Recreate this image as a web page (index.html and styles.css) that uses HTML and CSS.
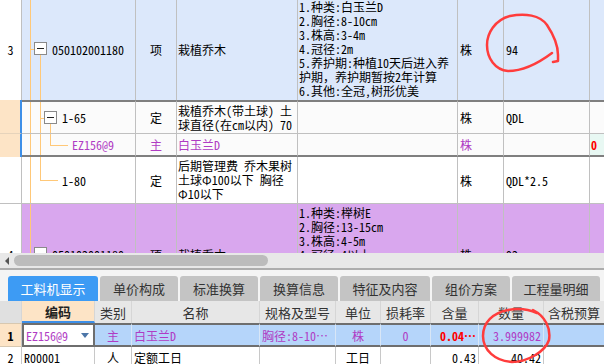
FILE: index.html
```html
<!DOCTYPE html>
<html lang="zh">
<head>
    <meta charset="utf-8">
    <title>分部分项</title>
    <link rel="stylesheet" href="styles.css">
</head>
<body>
<div class="grid">
    <div class="row r-item r3">
        <div class="c w-no">3</div>
        <div class="c w-code pad-a">
            <span class="t th h-a"></span><span class="tb b-a"></span><span class="t tv v-b-down"></span>050102001180
        </div>
        <div class="c w-type">项</div>
        <div class="c w-name">栽植乔木</div>
        <div class="c w-feat"><div class="lines">1.种类:白玉兰D<br>2.胸径:8-10cm<br>3.株高:3-4m<br>4.冠径:2m<br>5.养护期:种植10天后进入养<br>护期，养护期暂按2年计算<br>6.其他:全冠,树形优美</div></div>
        <div class="c w-unit">株</div>
        <div class="c w-expr">94</div>
        <div class="c w-last"></div>
    </div>
    <div class="grp">
        <div class="row r-sub first r165">
            <div class="c w-no"></div>
            <div class="c w-code pad-b">
                <span class="t tv v-b"></span><span class="t th h-b"></span><span class="tb b-b"></span><span class="t tv v-c-down"></span>1-65
            </div>
            <div class="c w-type">定</div>
            <div class="c w-name"><div class="lines">栽植乔木(带土球) 土<br>球直径(在cm以内) 70</div></div>
            <div class="c w-feat"></div>
            <div class="c w-unit">株</div>
            <div class="c w-expr">QDL</div>
            <div class="c w-last"></div>
        </div>
        <div class="row r-sub last rez">
            <div class="c w-no"></div>
            <div class="c w-code pad-c purple">
                <span class="t tv v-b"></span><span class="t tv v-c-up"></span><span class="t th h-c-leaf"></span>EZ156@9
            </div>
            <div class="c w-type purple">主</div>
            <div class="c w-name purple">白玉兰D</div>
            <div class="c w-feat"></div>
            <div class="c w-unit purple">株</div>
            <div class="c w-expr"></div>
            <div class="c w-last zero">0</div>
        </div>
    </div>
    <div class="row r180">
        <div class="c w-no"></div>
        <div class="c w-code pad-b">
            <span class="t tv v-b-up"></span><span class="t th h-b-leaf"></span>1-80
        </div>
        <div class="c w-type">定</div>
        <div class="c w-name"><div class="lines">后期管理费 乔木果树<br>土球Φ100以下 胸径<br>Φ10以下</div></div>
        <div class="c w-feat"></div>
        <div class="c w-unit">株</div>
        <div class="c w-expr">QDL*2.5</div>
        <div class="c w-last"></div>
    </div>
    <div class="row r-item r4">
        <div class="c w-no">4</div>
        <div class="c w-code pad-a">
            <span class="t th h-a"></span><span class="tb b-a"></span><span class="t tv v-b-down"></span>050102001180
        </div>
        <div class="c w-type">项</div>
        <div class="c w-name">栽植乔木</div>
        <div class="c w-feat"><div class="lines">1.种类:榉树E<br>2.胸径:13-15cm<br>3.株高:4-5m<br>4.冠径:4以上</div></div>
        <div class="c w-unit">株</div>
        <div class="c w-expr">92</div>
        <div class="c w-last"></div>
    </div>
</div>

<div class="hscroll">
    <span class="arrow"></span>
    <span class="thumb"></span>
</div>

<div class="tabs">
    <div class="tab on w90">工料机显示</div>
    <div class="tab">单价构成</div>
    <div class="tab">标准换算</div>
    <div class="tab">换算信息</div>
    <div class="tab w90">特征及内容</div>
    <div class="tab">组价方案</div>
    <div class="tab w88">工程量明细</div>
</div>

<div class="btable">
    <div class="brow bhead">
        <div class="bc b-no"></div>
        <div class="bc b-code key">编码</div>
        <div class="bc b-type">类别</div>
        <div class="bc b-name">名称</div>
        <div class="bc b-spec">规格及型号</div>
        <div class="bc b-unit">单位</div>
        <div class="bc b-loss">损耗率</div>
        <div class="bc b-qty">含量</div>
        <div class="bc b-num">数量</div>
        <div class="bc b-tax">含税预算</div>
    </div>
    <div class="brow sel">
        <div class="bc b-no">1</div>
        <div class="bc b-code edit"><span>EZ156@9</span><span class="drop"></span></div>
        <div class="bc b-type">主</div>
        <div class="bc b-name left">白玉兰D</div>
        <div class="bc b-spec left">胸径:8-10…</div>
        <div class="bc b-unit">株</div>
        <div class="bc b-loss">0</div>
        <div class="bc b-qty right red">0.04…</div>
        <div class="bc b-num right">3.999982</div>
        <div class="bc b-tax"></div>
    </div>
    <div class="brow">
        <div class="bc b-no">2</div>
        <div class="bc b-code left">R00001</div>
        <div class="bc b-type">人</div>
        <div class="bc b-name left">定额工日</div>
        <div class="bc b-spec"></div>
        <div class="bc b-unit">工日</div>
        <div class="bc b-loss"></div>
        <div class="bc b-qty right">0.43</div>
        <div class="bc b-num right">40.42</div>
        <div class="bc b-tax"></div>
    </div>
</div>

<svg class="marks" width="604" height="364" viewBox="0 0 604 364">
    <path d="M552,53 C540,62 523,71 508,71 C495,70 487,58 487,45 C487,33 495,20 510,16 C525,13 540,15 547,25 C553,34 558,45 558,55 L558,61 L553,62"/>
    <path d="M533,310 C545,316 551,328 549,340 C545,352 527,362 512,362 C495,361 483,350 483,336 C483,322 493,313 508,310 C518,308 528,309 537,313"/>
</svg>
</body>
</html>
```

FILE: styles.css
```css
body {
    margin: 0;
    width: 604px;
    height: 364px;
    overflow: hidden;
    position: relative;
    background: #fff;
    color: #000;
    font-size: 12px;
    font-family: "Noto Sans Mono CJK SC", "Liberation Mono", "Noto Sans CJK SC", monospace;
}

/* top grid */

.grid {
    height: 255px;
    margin-top: -2px;
    overflow: hidden;
}

.row {
    display: flex;
}

.c {
    box-sizing: border-box;
    border-right: 1px solid #c0c0c0;
    border-bottom: 1px solid #c0c0c0;
    display: flex;
    align-items: center;
    white-space: nowrap;
    overflow: hidden;
    padding: 0 2px;
}

.lines {
    line-height: 14px;
}

.w-no {
    width: 22px;
    padding: 0;
    justify-content: center;
    background: #fff;
}

.w-code {
    width: 114px;
    position: relative;
    background-image: linear-gradient(#ffc878, #ffc878);
    background-repeat: no-repeat;
    background-size: 1px 100%;
    background-position: 8px 0;
}

.w-type {
    width: 41px;
    justify-content: center;
}

.w-name {
    width: 121px;
    padding-left: 1px;
}

.w-feat {
    width: 160px;
    padding-left: 1px;
}

.w-unit {
    width: 46px;
}

.w-expr {
    width: 86px;
}

.w-last {
    flex: 1;
    border-right: 0;
}

.r3 {
    height: 102px;
}

.r3 .c {
    border-bottom: 0;
}

.r3 .c:not(.w-no) {
    background-color: #dce8fb;
}

.r4 {
    height: 101px;
}

.r4 .c:not(.w-no) {
    background-color: #d9a7ee;
}

.r4 .w-feat {
    align-items: flex-start;
    padding-top: 2px;
}

.r165 {
    height: 34px;
}

.rez {
    height: 23px;
}

.r180 {
    height: 47px;
}

.r-sub .c {
    background-color: #fbfbfb;
}

.r-sub .w-no {
    background: #fde4c6;
    border-right: 2px solid #3d8fe8;
}

.r-sub.first .c:not(.w-no) {
    border-top: 2px solid #7f7f7f;
}

.r-sub.last .c:not(.w-no) {
    border-bottom: 2px solid #7f7f7f;
}

.r-sub.last .w-no {
    border-bottom: 0;
}

.r-sub.first .w-no {
    border-bottom-color: #e6d3bb;
}

.purple {
    color: #b03cc4;
}

.zero {
    background-color: #e8f8f3 !important;
    color: #f00;
    font-weight: bold;
    padding-left: 1px;
}

/* tree connectors */

.pad-a {
    padding-left: 30px;
}

.pad-b {
    padding-left: 40px;
}

.pad-c {
    padding-left: 50px;
}

.t {
    position: absolute;
    background: #ffc878;
}

.tv {
    width: 1px;
}

.th {
    height: 1px;
    top: 50%;
}

.tb {
    position: absolute;
    top: 50%;
    width: 13px;
    height: 13px;
    margin-top: -7px;
    box-sizing: border-box;
    border: 1px solid #8a8a8a;
    background: #fff;
}

.tb::after {
    content: "";
    position: absolute;
    left: 2px;
    right: 2px;
    top: 5px;
    height: 1px;
    background: #222;
}

.h-a { left: 8px; width: 4px; }
.b-a { left: 12px; }
.v-b-down { left: 18px; top: calc(50% + 6px); bottom: 0; }
.v-b { left: 18px; top: 0; bottom: 0; }
.v-b-up { left: 18px; top: 0; height: 50%; }
.h-b { left: 18px; width: 4px; }
.h-b-leaf { left: 18px; width: 18px; }
.b-b { left: 22px; }
.v-c-down { left: 28px; top: calc(50% + 6px); bottom: 0; }
.v-c-up { left: 28px; top: 0; height: 50%; }
.h-c-leaf { left: 28px; width: 18px; }

/* scrollbar + tabs */

.hscroll {
    height: 15px;
    background: #e8e8e8;
    border-bottom: 2px solid #adadad;
    display: flex;
    align-items: center;
    gap: 5px;
    padding-left: 5px;
}

.arrow {
    width: 0;
    height: 0;
    border-top: 4px solid transparent;
    border-bottom: 4px solid transparent;
    border-right: 4px solid #555;
}

.thumb {
    width: 254px;
    height: 11px;
    border-radius: 6px;
    background: #bcbcbc;
}

.tabs {
    display: flex;
    gap: 2px;
    box-sizing: border-box;
    height: 31px;
    padding: 6px 0 0 8px;
    background: #f4f4f4;
}

.tab {
    width: 78px;
    height: 25px;
    border-radius: 3px 3px 0 0;
    background: #c4c4c4;
    color: #333;
    display: flex;
    align-items: center;
    justify-content: center;
    font-size: 13px;
    font-family: "Noto Sans CJK SC", "Noto Sans", sans-serif;
}

.tab.on {
    background: #3d9bf4;
    color: #fff;
}

.w90 {
    width: 90px;
}

.w88 {
    width: 88px;
}

/* bottom table */

.brow {
    display: flex;
    height: 21px;
}

.bc {
    box-sizing: border-box;
    border-right: 1px solid #c8c8c8;
    border-bottom: 1px solid #c8c8c8;
    display: flex;
    align-items: center;
    justify-content: center;
    white-space: nowrap;
    overflow: hidden;
    padding: 0 2px;
}

.bc.left {
    justify-content: flex-start;
}

.bc.right {
    justify-content: flex-end;
}

.b-no { width: 22px; }
.b-code { width: 73px; }
.b-type { width: 37px; }
.b-name { width: 128px; }
.b-spec { width: 76px; }
.b-unit { width: 45px; }
.b-loss { width: 50px; }
.b-qty { width: 48px; }
.b-num { width: 65px; }
.b-tax { flex: 1; border-right: 0; }

.bhead {
    height: 22px;
    background: #e7e7e7;
    color: #333;
    font-size: 13px;
    font-family: "Noto Sans CJK SC", "Noto Sans", sans-serif;
}

.bhead .bc {
    border-bottom: 0;
    border-right-color: #d6d6d6;
}

.bhead .b-no {
    background: #e0e0e0;
}

.bhead .key {
    background: #fde4c6;
    border-bottom: 2px solid #3d8fe8;
    font-weight: bold;
    color: #222;
}

.sel {
    height: 24px;
}

.sel .bc {
    background: #b5d5fa;
    color: #b03cc4;
    border-top: 2px solid #6e6e6e;
    border-bottom: 2px solid #6e6e6e;
    border-right-color: #d8e6f6;
}

.sel .b-no {
    background: #fde4c6;
    color: #000;
    font-weight: bold;
    border-top: 1px solid #d8c8b0;
    border-bottom: 1px solid #d8c8b0;
    border-right-color: #c8c8c8;
}

.sel .edit {
    background: #fff;
    border-left: 2px solid #6e6e6e;
    border-right: 2px solid #6e6e6e;
    justify-content: space-between;
    padding: 0 4px 0 2px;
}

.drop {
    width: 0;
    height: 0;
    border-left: 4px solid transparent;
    border-right: 4px solid transparent;
    border-top: 5px solid #4c76a8;
}

.sel .red {
    color: #f00;
    font-weight: bold;
}

.marks {
    position: absolute;
    left: 0;
    top: 0;
    pointer-events: none;
}

.marks path {
    fill: none;
    stroke: #ff3c3c;
    stroke-width: 2.5;
    stroke-linecap: round;
    stroke-linejoin: round;
}
```
